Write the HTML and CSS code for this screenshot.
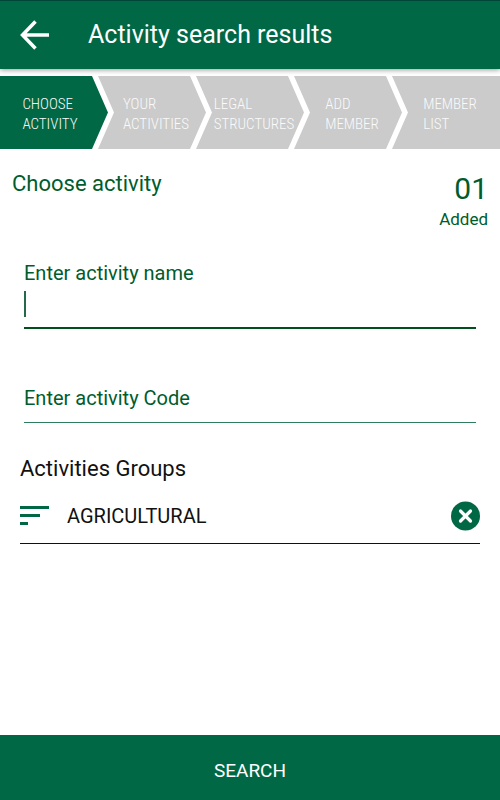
FILE: index.html
```html
<!DOCTYPE html>
<html lang="en">
<head>
<meta charset="utf-8">
<meta name="viewport" content="width=device-width, initial-scale=1">
<title>Activity search results</title>
<link rel="stylesheet" href="styles.css">
</head>
<body>
<header class="app-bar">
  <button class="icon-button" type="button" aria-label="Back">
    <svg width="30" height="30" viewBox="0 0 30 30" fill="none" stroke="#fff" stroke-width="3.5"><path d="M29 15H2.500M15.500 1.500L2.500 15l13 13.500"/></svg>
  </button>
  <h1 class="app-title">Activity search results</h1>
</header>
<ol class="steps">
  <li class="step step-active" aria-current="step"><span>CHOOSE<br>ACTIVITY</span></li>
  <li class="step"><span>YOUR<br>ACTIVITIES</span></li>
  <li class="step"><span>LEGAL<br>STRUCTURES</span></li>
  <li class="step"><span>ADD<br>MEMBER</span></li>
  <li class="step"><span>MEMBER<br>LIST</span></li>
</ol>
<main class="content">
  <div class="summary">
    <h2 class="heading">Choose activity</h2>
    <div class="counter"><span class="count">01</span><span class="count-label">Added</span></div>
  </div>
  <form class="search-form" id="search-form">
    <div class="field field-focused">
      <label class="field-label" for="name">Enter activity name</label>
      <div class="entry"><span class="caret"></span><input class="field-input" id="name" type="text"></div>
    </div>
    <div class="field">
      <label class="field-label" for="code">Enter activity Code</label>
      <input class="field-input" id="code" type="text">
    </div>
  </form>
  <section class="groups">
    <h2 class="heading">Activities Groups</h2>
    <div class="group">
      <svg width="29" height="20" viewBox="0 0 29 20" fill="#006845"><path d="M0 0h29v3H0zM0 8h20v3H0zM0 16h8v3H0z"/></svg>
      <span class="group-name">AGRICULTURAL</span>
      <button class="icon-button" type="button" aria-label="Remove Agricultural">
        <svg width="30" height="30" viewBox="0 0 30 30"><circle cx="15.500" cy="15" r="14.500" fill="#006845"/><path d="M10.500 10l10 10M20.500 10l-10 10" stroke="#fff" stroke-width="3.200" stroke-linecap="round"/></svg>
      </button>
    </div>
  </section>
</main>
<button class="search-button" type="submit" form="search-form">SEARCH</button>
</body>
</html>
```
FILE: styles.css
```css
* { box-sizing: border-box; }
body {
  margin: 0;
  min-height: 100vh;
  display: flex;
  flex-direction: column;
  background: #fff;
  color: #111;
  font-family: Roboto, "Liberation Sans", sans-serif;
}
h1, h2 { margin: 0; font-weight: 400; }
svg { display: block; }
button { border: 0; font: inherit; }
.icon-button { padding: 0; background: none; }
.app-bar {
  display: flex;
  align-items: center;
  gap: 38px;
  padding: 16px 20px;
  border-top: 1px solid #004538;
  background: #006845;
  color: #fff;
  box-shadow: 0 1px 5px rgba(0, 0, 0, 0.4);
}
.app-title { font-size: 25px; line-height: 36px; }
.steps {
  display: flex;
  gap: 6px;
  margin: 7px 0 0;
  padding: 0;
  list-style: none;
}
.step {
  flex: 1 1 0;
  min-width: 0;
  display: flex;
  justify-content: center;
  margin-right: -16px;
  padding: 18px 0 15px 8px;
  background: #cbcbcb;
  color: #fafafa;
  font-family: "Roboto Condensed", "Liberation Sans Narrow", Roboto, sans-serif;
  font-weight: 300;
  font-size: 15px;
  line-height: 20px;
  clip-path: polygon(0 0, calc(100% - 16px) 0, 100% 50%, calc(100% - 16px) 100%, 0 100%, 16px 50%);
}
.step-active {
  padding-left: 0;
  padding-right: 8px;
  background: #006845;
  clip-path: polygon(0 0, calc(100% - 16px) 0, 100% 50%, calc(100% - 16px) 100%, 0 100%);
}
.step:last-child {
  margin-right: 0;
  clip-path: polygon(0 0, 100% 0, 100% 100%, 0 100%, 16px 50%);
}
.content { flex: 1; color: #005c2d; }
.summary {
  display: flex;
  justify-content: space-between;
  align-items: flex-start;
  padding: 20px 12px 0;
}
.heading { font-size: 22px; line-height: 30px; }
.counter { display: flex; flex-direction: column; align-items: flex-end; }
.count { font-size: 30px; line-height: 40px; }
.count-label { font-size: 17px; line-height: 20px; }
.search-form { padding: 32px 24px 0; }
.field { border-bottom: 1px solid #2f7d5f; }
.field-focused { margin-bottom: 57px; border-bottom: 2px solid #004f1c; }
.field-label { display: block; font-size: 20px; line-height: 24px; }
.entry { display: flex; height: 42px; padding-top: 6px; }
.caret { width: 2px; height: 26px; background: #24694a; }
.field-input {
  display: block;
  width: 100%;
  height: 12px;
  padding: 0;
  border: 0;
  outline: 0;
  background: none;
  color: inherit;
  font: inherit;
}
.entry .field-input { height: 26px; }
.groups { padding: 31px 20px 0; color: #111; }
.group {
  display: flex;
  align-items: center;
  gap: 18px;
  padding: 17px 0 12px;
  border-bottom: 1px solid #111;
}
.group-name { flex: 1; font-size: 20px; line-height: 30px; }
.search-button {
  padding: 23px 20px 17px;
  background: #006845;
  color: #fff;
  font-size: 19px;
  line-height: 25px;
}
```
